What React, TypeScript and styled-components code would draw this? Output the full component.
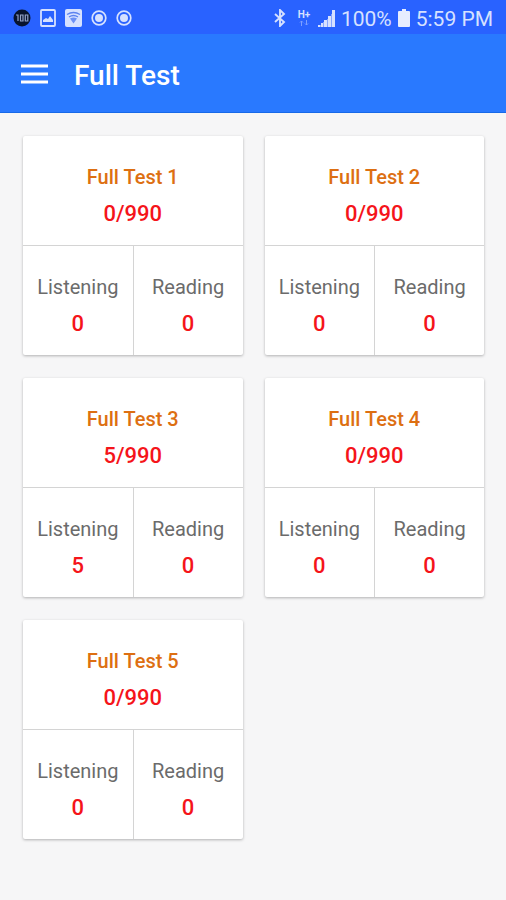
import React from "react";
import styled, { createGlobalStyle } from "styled-components";

const GlobalStyle = createGlobalStyle`
  *, *::before, *::after { box-sizing: border-box; }
  body {
    margin: 0;
    background: #f6f6f7;
    font-family: Roboto, "Liberation Sans", sans-serif;
  }
`;

const StatusBar = styled.div`
  display: flex;
  align-items: center;
  justify-content: space-between;
  height: 34px;
  padding: 2px 13px 0;
  background: #2962ff;
  color: #d6e1ff;
`;

const StatusGroup = styled.div<{ $gap: number }>`
  display: flex;
  align-items: center;
  gap: ${({ $gap }) => $gap}px;
`;

const StatusText = styled.span`
  padding-top: 2px;
  font-size: 21px;
  line-height: 26px;
  white-space: nowrap;
`;

const AppBar = styled.header`
  display: flex;
  align-items: center;
  gap: 26px;
  height: 79px;
  padding: 2px 21px 0;
  background: #2979ff;
  border-bottom: 1px solid #1769e8;
  color: #fff;
`;

const MenuButton = styled.button`
  display: flex;
  padding: 0;
  border: 0;
  background: none;
  color: inherit;
  cursor: pointer;
`;

const PageTitle = styled.h1`
  margin: 0;
  padding-top: 4px;
  font-size: 28px;
  line-height: 36px;
  font-weight: 500;
`;

const TestGrid = styled.main`
  display: grid;
  grid-template-columns: 1fr 1fr;
  gap: 23px 22px;
  padding: 23px 22px 23px 23px;
`;

const Card = styled.article`
  border-radius: 2px;
  background: #fff;
  box-shadow: 0 1px 3px rgba(0, 0, 0, 0.28);
`;

const Cell = styled.div`
  display: flex;
  flex-direction: column;
  align-items: center;
  gap: 10px;
  padding: 27px 0 18px;
`;

const Sections = styled.div`
  display: grid;
  grid-template-columns: 1fr 1fr;
  border-top: 1px solid #d4d4d4;

  & > * + * {
    border-left: 1px solid #d4d4d4;
  }
`;

const CardTitle = styled.h2`
  margin: 0;
  color: #dd6f12;
  font-size: 20px;
  line-height: 28px;
  font-weight: 500;
`;

const SectionLabel = styled.span`
  color: #6b6b6b;
  font-size: 20px;
  line-height: 28px;
`;

const Score = styled.span`
  color: #f5141a;
  font-size: 22px;
  line-height: 26px;
  font-weight: 500;
`;

const BadgeIcon = () => (
  <svg width="18" height="18" viewBox="0 0 18 18" aria-hidden="true">
    <circle cx="9" cy="9" r="8.5" fill="#08132e" />
    <path d="M3 6h2v6M7.500 6h2.500v6H7.500zM12.300 6h2.500v6h-2.500z" fill="none" stroke="#94a3c8" strokeWidth="1.200" />
  </svg>
);

const PictureIcon = () => (
  <svg width="16" height="18" viewBox="0 0 16 18" aria-hidden="true">
    <rect x="1" y="1" width="14" height="16" rx="1" fill="none" stroke="currentColor" strokeWidth="1.800" />
    <path d="M3 13V11l3-2 2 1 2-3 3 4v2z" fill="currentColor" />
  </svg>
);

const WifiIcon = () => (
  <svg width="17" height="18" viewBox="0 0 17 18" aria-hidden="true">
    <rect width="17" height="18" rx="2" fill="currentColor" />
    <path d="M2 5.500q6.500-4 13 0M4 8q4.500-3 9 0" fill="none" stroke="#5c83f0" strokeWidth="1.300" />
    <path d="M5 9.500q3.500-2 7 0l-3.500 5z" fill="#6d91f5" />
  </svg>
);

const RecordIcon = () => (
  <svg width="16" height="16" viewBox="0 0 16 16" aria-hidden="true">
    <circle cx="8" cy="8" r="6.800" fill="none" stroke="currentColor" strokeWidth="1.700" />
    <circle cx="8" cy="8" r="4" fill="currentColor" />
  </svg>
);

const BluetoothIcon = () => (
  <svg width="12" height="18" viewBox="0 0 12 18" aria-hidden="true">
    <path d="M1 5l9 8-4 4V1l4 4-9 8" fill="none" stroke="currentColor" strokeWidth="1.900" />
  </svg>
);

const Network = styled.span`
  display: flex;
  flex-direction: column;
  align-items: center;
  width: 20px;
  padding-left: 4px;
  font-size: 10px;
  line-height: 10px;
  font-weight: 700;
`;

const ArrowsIcon = () => (
  <svg width="10" height="6" viewBox="0 0 10 6" aria-hidden="true">
    <path d="M2.500 6V1M1 2.500L2.500 1 4 2.500M7.500 0v5M6 3.500L7.500 5 9 3.500" fill="none" stroke="#7d9fff" />
  </svg>
);

const SignalIcon = () => (
  <svg width="17" height="18" viewBox="0 0 17 18" aria-hidden="true">
    <path d="M0 16h2v2H0zM3 14h2v4H3zM6 11h3v7H6zM10 7h3v11h-3zM14 1h3v17h-3z" fill="currentColor" />
    <path d="M2 16h1v2H2zM5 13h1v5H5zM9 10h1v8H9zM13 5h1v13h-1z" fill="#86a6ff" />
  </svg>
);

const BatteryIcon = () => (
  <svg width="12" height="18" viewBox="0 0 12 18" aria-hidden="true">
    <path d="M4 0h4v2h3q1 0 1 1v14q0 1-1 1H1q-1 0-1-1V3q0-1 1-1h3z" fill="#e6edff" />
  </svg>
);

const MenuIcon = () => (
  <svg width="27" height="20" viewBox="0 0 27 20" aria-hidden="true">
    <path d="M0 2h27M0 10h27M0 18h27" stroke="currentColor" strokeWidth="3" />
  </svg>
);

interface TestResult {
  name: string;
  listening: number;
  reading: number;
}

const tests: TestResult[] = [
  { name: "Full Test 1", listening: 0, reading: 0 },
  { name: "Full Test 2", listening: 0, reading: 0 },
  { name: "Full Test 3", listening: 5, reading: 0 },
  { name: "Full Test 4", listening: 0, reading: 0 },
  { name: "Full Test 5", listening: 0, reading: 0 },
];

const TestCard = ({ name, listening, reading }: TestResult) => (
  <Card>
    <Cell>
      <CardTitle>{name}</CardTitle>
      <Score>{`${listening + reading}/990`}</Score>
    </Cell>
    <Sections>
      <Cell>
        <SectionLabel>Listening</SectionLabel>
        <Score>{listening}</Score>
      </Cell>
      <Cell>
        <SectionLabel>Reading</SectionLabel>
        <Score>{reading}</Score>
      </Cell>
    </Sections>
  </Card>
);

export default function App() {
  return (
    <>
      <GlobalStyle />
      <StatusBar>
        <StatusGroup $gap={9}>
          <BadgeIcon />
          <PictureIcon />
          <WifiIcon />
          <RecordIcon />
          <RecordIcon />
        </StatusGroup>
        <StatusGroup $gap={6}>
          <BluetoothIcon />
          <Network>
            H+
            <ArrowsIcon />
          </Network>
          <SignalIcon />
          <StatusText>100%</StatusText>
          <BatteryIcon />
          <StatusText>5:59 PM</StatusText>
        </StatusGroup>
      </StatusBar>
      <AppBar>
        <MenuButton type="button" aria-label="Open menu">
          <MenuIcon />
        </MenuButton>
        <PageTitle>Full Test</PageTitle>
      </AppBar>
      <TestGrid>
        {tests.map((test) => (
          <TestCard key={test.name} {...test} />
        ))}
      </TestGrid>
    </>
  );
}
